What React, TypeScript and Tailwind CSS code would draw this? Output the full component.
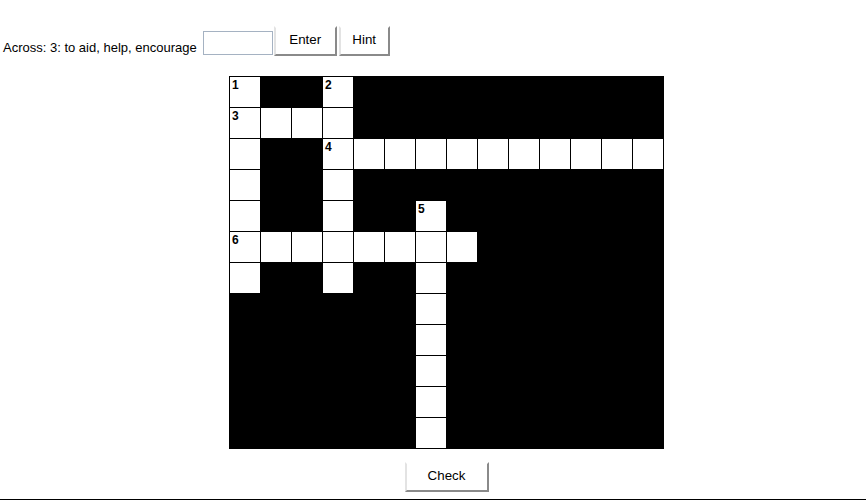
import React from "react";

// crossword layout: "." black, "#" white, digits = white with clue number
const ROWS = [
  "1..2..........",
  "3###..........",
  "#..4##########",
  "#..#..........",
  "#..#..5.......",
  "6#######......",
  "#..#..#.......",
  "......#.......",
  "......#.......",
  "......#.......",
  "......#.......",
  "......#.......",
];

function Cell({ ch }: { ch: string }) {
  if (ch === ".") return <div className="w-[30px] h-[30px] bg-black" />;
  const num = ch !== "#" ? ch : null;
  return (
    <div className="relative w-[30px] h-[30px] bg-white">
      {num && (
        <span className="absolute left-[2px] top-[2px] text-[12px] leading-[13px] font-bold text-black">
          {num}
        </span>
      )}
    </div>
  );
}

function Btn({ label, w }: { label: string; w: string }) {
  return (
    <button
      className={`${w} h-[30px] bg-white text-[13.33px] text-black border-2 border-t-white border-l-[#e3e3e3] border-r-[#8a8a8a] border-b-[#8a8a8a] pb-[3px]`}
    >
      {label}
    </button>
  );
}

export default function App() {
  return (
    <div
      className="w-[866px] h-[500px] bg-white text-black overflow-hidden flex flex-col"
      style={{ fontFamily: '"Liberation Sans", Arial, sans-serif' }}
    >
      {/* clue bar */}
      <div className="flex items-end h-[30px] mt-[26px] pl-[3px]">
        <span className="text-[13px] leading-[15px] mb-[1px]">Across: 3: to aid, help, encourage</span>
        <input className="ml-[6px] w-[70px] h-[24px] border border-[#a5b2c2] outline-none mb-[1px]" />
        <div className="ml-[1px] flex gap-[2px]">
          <Btn label="Enter" w="w-[63px]" />
          <Btn label="Hint" w="w-[51px]" />
        </div>
      </div>

      {/* grid */}
      <div className="flex justify-center pl-[27px] mt-[20px]">
        <div className="grid grid-cols-[repeat(14,30px)] gap-px p-px bg-black">
          {ROWS.map((row, r) =>
            row.split("").map((ch, c) => <Cell key={`${r}-${c}`} ch={ch} />)
          )}
        </div>
      </div>

      <div className="flex justify-center pl-[27px] mt-[13px]">
        <Btn label="Check" w="w-[84px]" />
      </div>

      <div className="mt-[7px] border-t border-black" />
    </div>
  );
}
